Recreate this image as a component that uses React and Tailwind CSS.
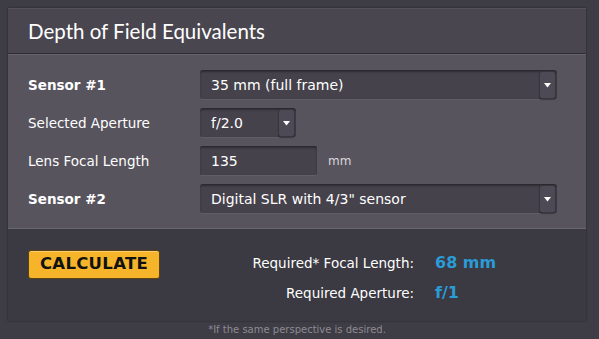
import React from "react";

const SelectBox = ({ value, width }) => (
  <div
    className={`${width} h-[30px] flex items-center justify-between rounded-[3px] bg-[#46424c] border-t border-t-[#2c2a30] border-b border-b-[#625e68] shadow-[inset_0_1px_2px_rgba(0,0,0,0.35)]`}
  >
    <span className="pl-[11px] text-[14px] text-white">{value}</span>
    <div className="mr-[1px] h-[28px] w-[17px] flex items-center justify-center rounded-[3px] bg-[#4e4a55] border border-[#38353d] shadow-[0_1px_1px_rgba(0,0,0,0.4)]">
      <svg width="7" height="5" viewBox="0 0 7 5">
        <path d="M0 0h7L3.5 4.5z" fill="#ffffff" />
      </svg>
    </div>
  </div>
);

const Row = ({ label, bold, children }) => (
  <div className="flex items-center h-[30px]">
    <div
      className={`w-[172px] text-[13.5px] text-white ${bold ? "font-bold" : ""}`}
    >
      {label}
    </div>
    {children}
  </div>
);

export default function App() {
  return (
    <div
      className="w-[599px] h-[339px] bg-[#3e3c44] pt-[8px] pl-[8px] overflow-hidden"
      style={{ fontFamily: '"DejaVu Sans", Verdana, sans-serif' }}
    >
      <div className="w-[578px] shadow-[0_0_2px_rgba(0,0,0,0.4)]">
        <div className="h-[46px] bg-[#4a4650] border-t border-[#56525c] border-b border-b-[#2f2d34] flex items-center pl-[20px]">
          <h1
            className="text-[20.5px] text-white"
            style={{ fontFamily: '"Lato", "Noto Sans", sans-serif' }}
          >
            Depth of Field Equivalents
          </h1>
        </div>
        <div className="bg-[#58545e] border-t border-[#67636d] pt-[15px] pb-[14px] pl-[20px] flex flex-col gap-[8px] border-b border-b-[#6a6670]">
          <Row label="Sensor #1" bold>
            <SelectBox value="35 mm (full frame)" width="w-[357px]" />
          </Row>
          <Row label="Selected Aperture">
            <SelectBox value="f/2.0" width="w-[96px]" />
          </Row>
          <Row label="Lens Focal Length">
            <div className="w-[117px] h-[30px] flex items-center rounded-[2px] bg-[#46424c] border-t border-t-[#2c2a30] border-b border-b-[#625e68] shadow-[inset_0_1px_2px_rgba(0,0,0,0.35)]">
              <span className="pl-[11px] text-[14px] text-white">135</span>
            </div>
            <span className="ml-[11px] text-[12px] text-[#d8d6dc]">mm</span>
          </Row>
          <Row label="Sensor #2" bold>
            <SelectBox value={'Digital SLR with 4/3" sensor'} width="w-[357px]" />
          </Row>
        </div>
        <div className="h-[92px] bg-[#3b3941] flex pl-[20px] pt-[19px]">
          <button className="mt-[2px] w-[132px] h-[29px] rounded-[3px] bg-[#f5b42a] border border-[#5a4310] text-[16.5px] font-bold text-[#111] tracking-[0.3px] shadow-[inset_0_1px_0_rgba(255,255,255,0.35)]">
            CALCULATE
          </button>
          <div className="ml-[54px] flex flex-col gap-[12px] pt-[6px]">
            <div className="flex items-center h-[18px]">
              <span className="w-[200px] whitespace-nowrap text-right text-[13.5px] text-white">
                Required* Focal Length:
              </span>
              <span className="ml-[21px] text-[16px] font-bold text-[#2a9bd7]">
                68 mm
              </span>
            </div>
            <div className="flex items-center h-[18px]">
              <span className="w-[200px] whitespace-nowrap text-right text-[13.5px] text-white">
                Required Aperture:
              </span>
              <span className="ml-[21px] text-[16px] font-bold text-[#2a9bd7]">
                f/1
              </span>
            </div>
          </div>
        </div>
      </div>
      <p className="w-[578px] text-center text-[10px] text-[#8d8b93] mt-[1px]">
        *If the same perspective is desired.
      </p>
    </div>
  );
}
